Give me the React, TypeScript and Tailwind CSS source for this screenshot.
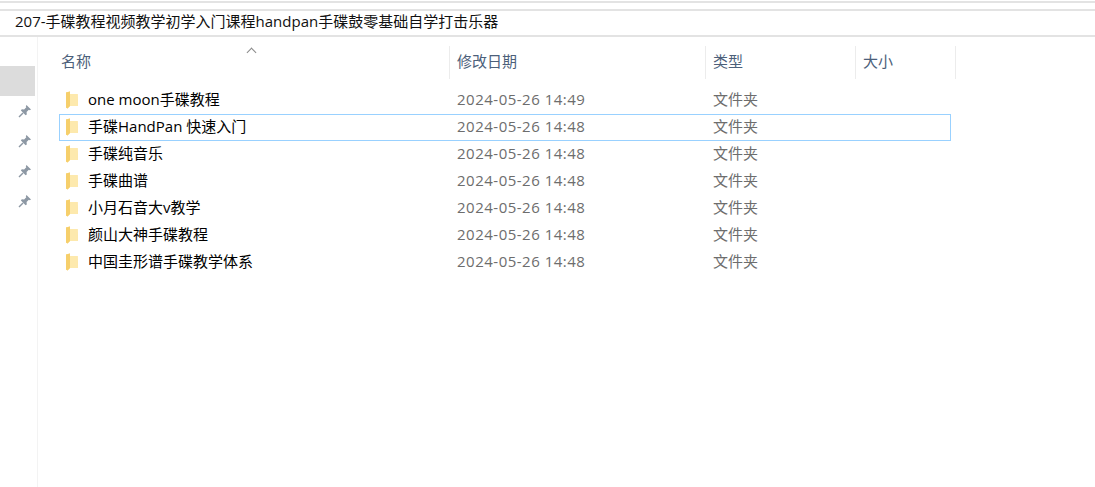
const rows = [
  { name: "one moon手碟教程", date: "2024-05-26 14:49" },
  { name: "手碟HandPan 快速入门", date: "2024-05-26 14:48", focused: true },
  { name: "手碟纯音乐", date: "2024-05-26 14:48" },
  { name: "手碟曲谱", date: "2024-05-26 14:48" },
  { name: "小月石音大v教学", date: "2024-05-26 14:48" },
  { name: "颜山大神手碟教程", date: "2024-05-26 14:48" },
  { name: "中国圭形谱手碟教学体系", date: "2024-05-26 14:48" },
];

const Folder = () => (
  <svg width="14" height="18" viewBox="0 0 14 18" className="shrink-0">
    <path d="M1 1.5 L5 0.5 L5 3 L12.5 3 L13 15 L5 15 L2.5 17.5 L1 16.5 Z" fill="#fbdc8c" />
    <path d="M1 1.5 L5 0.5 L5 15 L2.5 17.5 L1 16.5 Z" fill="#f6cf6b" />
    <path d="M5 3 L12.5 3 L13 15 L5 15 Z" fill="#fde9ad" />
  </svg>
);

const Pin = () => (
  <svg width="14" height="14" viewBox="0 0 14 14">
    <path d="M8.5 1 L13 5.5 L11.8 6.3 L10.8 5.8 L8.6 8 L8.8 10.4 L7.6 11.2 L2.9 6.5 L3.8 5.3 L6.1 5.5 L8.3 3.3 L7.8 2.2 Z" fill="#8d98a4" />
    <path d="M5 9 L1 13" stroke="#8d98a4" strokeWidth="1.4" />
  </svg>
);

export default function App() {
  return (
    <div className="w-[1095px] h-[487px] overflow-hidden bg-white font-['Open_Sans','Noto_Sans_CJK_SC',sans-serif]">
      <div className="h-[2px] mt-px bg-[#e3e3e3]" />
      <div className="h-[2px] mt-[6px] bg-[#e3e3e3]" />
      <div className="h-[26px] border-b-2 border-[#e3e3e3] pl-[15px] pb-[3px] flex items-center text-[15px] text-[#111] whitespace-nowrap">
        207-手碟教程视频教学初学入门课程handpan手碟鼓零基础自学打击乐器
      </div>
      <div className="flex h-[450px]">
        <div className="w-[38px] shrink-0 border-r border-[#f3f3f3] pt-[29px]">
          <div className="h-[30px] w-[35px] bg-[#dcdcdc]" />
          <div className="pl-[18px] pt-2 flex flex-col gap-4">
            <Pin />
            <Pin />
            <Pin />
            <Pin />
          </div>
        </div>
        <div className="flex-1 pl-[21px]">
          <div className="relative flex h-[33px] mt-[9px] text-[15px] text-[#4c607a] items-center">
            <span className="absolute left-[189px] top-[3px] w-[7px] h-[7px] border-l border-t border-[#8a8a8a] rotate-45" />
            <div className="w-[390px] pl-[2px] pb-[2px]">名称</div>
            <div className="w-[256px] h-full pl-[7px] pb-[2px] border-l border-[#ececec] flex items-center">修改日期</div>
            <div className="w-[150px] h-full pl-[7px] pb-[2px] border-l border-[#ececec] flex items-center">类型</div>
            <div className="w-[101px] h-full pl-[7px] pb-[2px] border-x border-[#ececec] flex items-center">大小</div>
          </div>
          <div className="mt-2 w-[892px]">
            {rows.map((r) => (
              <div
                key={r.name}
                className={`flex items-center h-[27px] pb-[2px] text-[15px] ${r.focused ? "border border-[#99d1ff]" : "border border-transparent"}`}
              >
                <div className="w-[397px] flex items-center pl-[5px] gap-[9px] text-black whitespace-nowrap">
                  <Folder />
                  {r.name}
                </div>
                <div className="w-[256px] text-[#6d6d6d] tracking-[0.5px]">{r.date}</div>
                <div className="text-[#6d6d6d]">文件夹</div>
              </div>
            ))}
          </div>
        </div>
      </div>
    </div>
  );
}
